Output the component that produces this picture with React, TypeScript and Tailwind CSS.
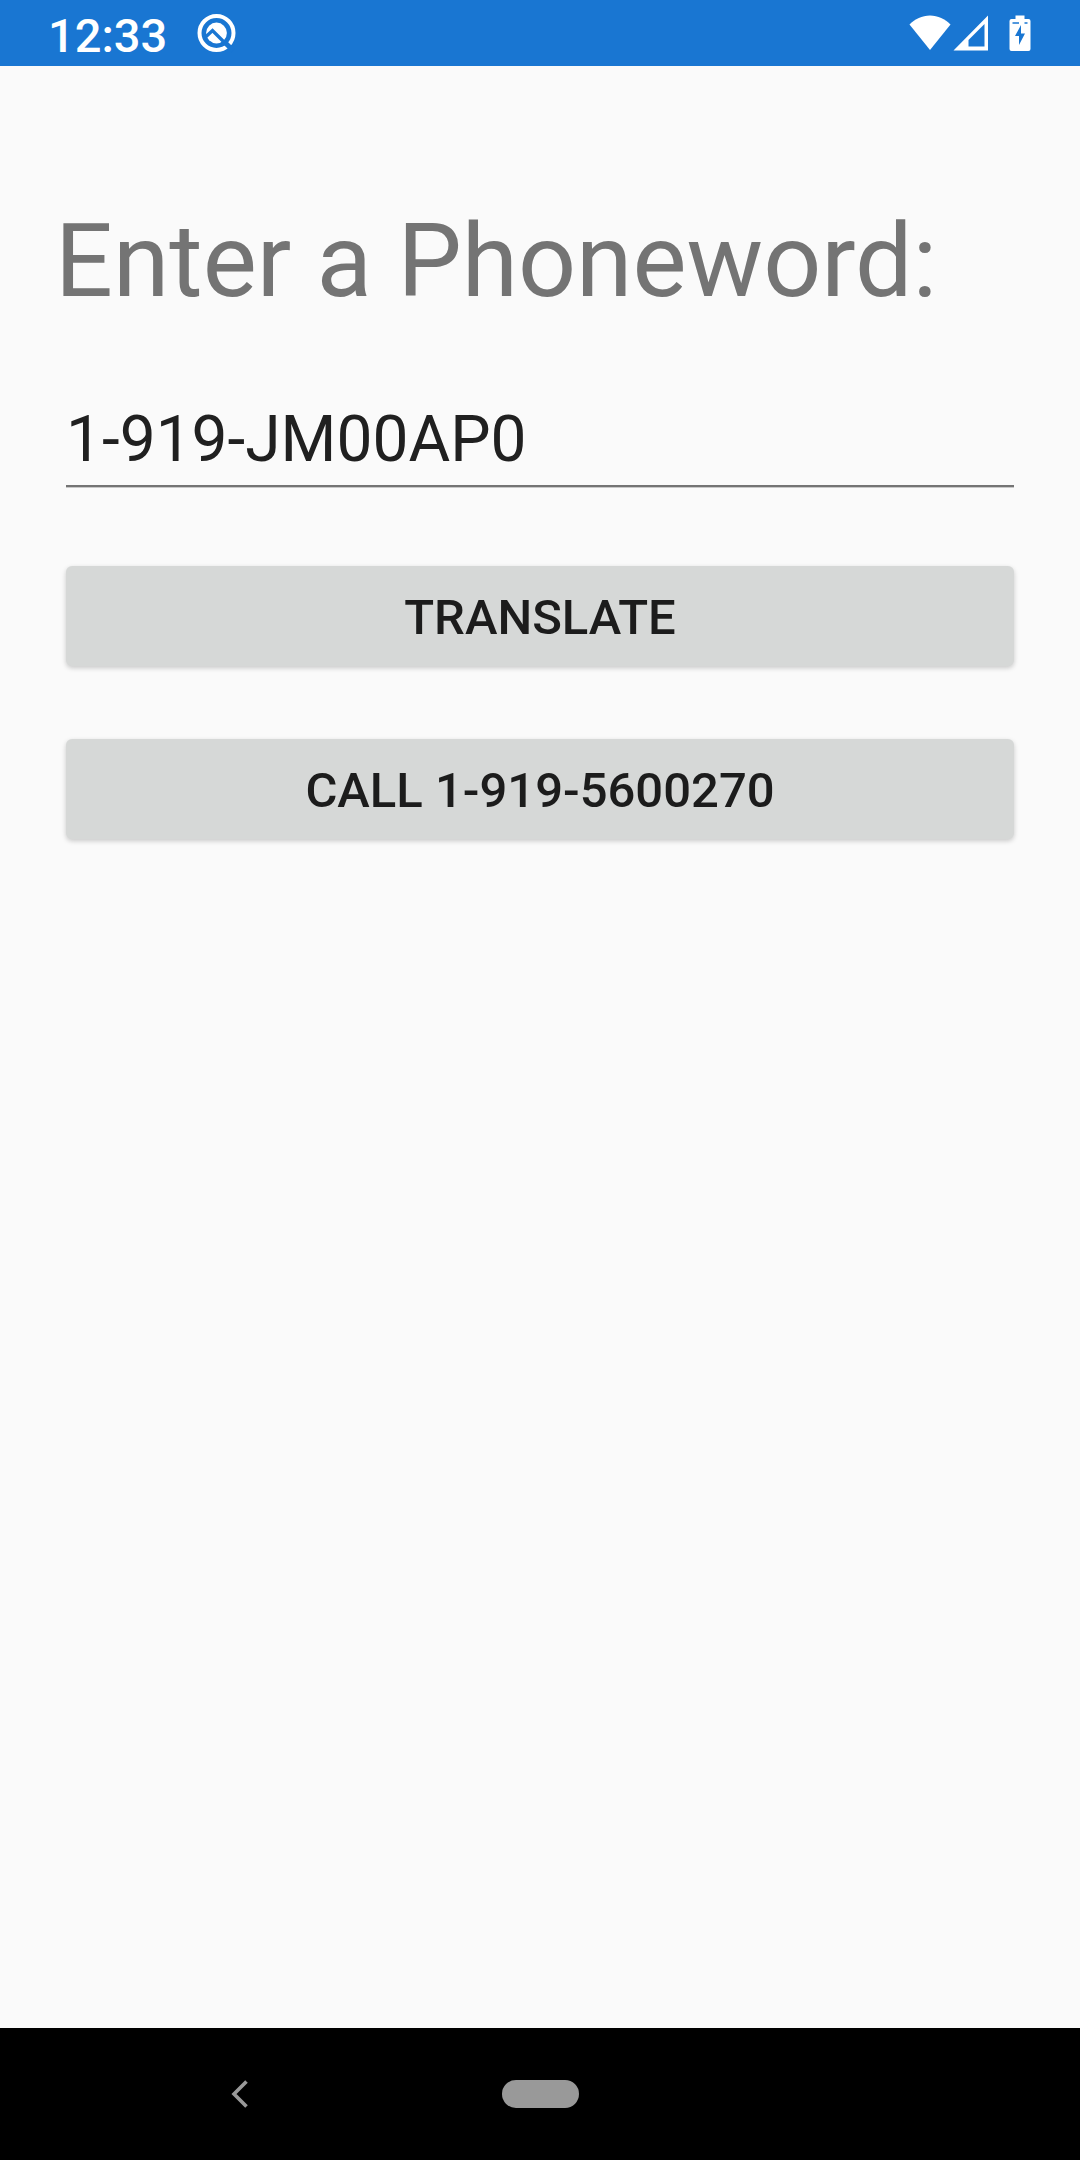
import React from "react";

function QBadge() {
  return (
    <svg viewBox="0 0 40 40" className="size-10" fill="none" aria-hidden="true">
      <circle cx="19.5" cy="20" r="17" stroke="#fff" strokeWidth="4" />
      <circle cx="19.5" cy="20" r="10.4" fill="#fff" />
      <path d="M7.5 25L15.5 17.5L30 32" stroke="#1976d2" strokeWidth="3.4" />
      <path d="M28 29.5L36 37.5" stroke="#1976d2" strokeWidth="5" />
    </svg>
  );
}

function WifiIcon() {
  return (
    <svg viewBox="0 0 42 36" className="h-9 w-[42px]" aria-hidden="true">
      <path d="M0.5 9.5C6 4 13 0.5 21 0.5S36 4 41.5 9.5L21 35Z" fill="#fff" />
    </svg>
  );
}

function SignalIcon() {
  return (
    <svg viewBox="0 0 36 36" className="size-9" aria-hidden="true">
      <path fillRule="evenodd" d="M0.5 35.5L35 0.5V35.5ZM15.5 31.5H31.5V9L15.5 25Z" fill="#fff" />
    </svg>
  );
}

function BatteryIcon() {
  return (
    <svg viewBox="0 0 22 36" className="h-9 w-[22px]" aria-hidden="true">
      <path
        fillRule="evenodd"
        d="M6.5 0.5H15.5V4H19.5Q21.5 4 21.5 6V34Q21.5 36 19.5 36H2.5Q0.5 36 0.5 34V6Q0.5 4 2.5 4H6.5ZM12 10L6 21H10V30L16 18.5H12Z"
        fill="#fff"
      />
      <path d="M3.5 8H10M15.5 8H18.5" stroke="#1976d2" strokeWidth="1.4" />
    </svg>
  );
}

const buttonClass =
  "block h-[100px] w-full rounded-md bg-[#d6d8d7] pt-[3px] text-[49px] leading-none font-medium text-[#1c1c1c] uppercase shadow-[0_2px_5px_rgba(0,0,0,0.2)]";

export default function App() {
  const [word, setWord] = React.useState("1-919-JM00AP0");

  return (
    <div className="flex min-h-screen flex-col bg-[#fafafa] font-['Roboto',sans-serif]">
      <header className="flex h-[66px] items-center justify-between bg-[#1976d2] pr-[49px] pl-12">
        <div className="flex items-center gap-[30px]">
          <time className="pt-1 text-[47px] leading-none font-medium text-white">12:33</time>
          <QBadge />
        </div>
        <div className="flex items-center">
          <WifiIcon />
          <span className="ml-[2px]">
            <SignalIcon />
          </span>
          <span className="ml-5">
            <BatteryIcon />
          </span>
        </div>
      </header>

      <main className="flex-1 px-[55px] pt-[134px]">
        <label htmlFor="phoneword" className="block text-[102px] leading-[122px] text-[#747474]">
          Enter a Phoneword:
        </label>
        <div className="px-[11px] pt-20">
          <input
            id="phoneword"
            type="text"
            value={word}
            onChange={(e) => setWord(e.target.value)}
            className="block h-[85px] w-full border-b-2 border-[#747474] bg-transparent pb-[7px] text-[64px] text-[#202020] shadow-[0_1px_0_#c8c8c8] outline-none"
          />
          <div className="flex flex-col gap-[73px] pt-[79px]">
            <button type="button" className={buttonClass}>
              Translate
            </button>
            <button type="button" className={buttonClass}>
              Call 1-919-5600270
            </button>
          </div>
        </div>
      </main>

      <nav className="grid h-[132px] grid-cols-9 items-center bg-black">
        <button type="button" aria-label="Back" className="col-start-2 col-end-4 flex justify-center">
          <svg viewBox="0 0 18 28" className="h-7 w-[18px]" fill="none" aria-hidden="true">
            <path d="M15.5 1.5L3 14L15.5 26.5" stroke="#999" strokeWidth="3.6" />
          </svg>
        </button>
        <button type="button" aria-label="Home" className="col-start-4 col-end-7 flex justify-center">
          <span className="h-7 w-[77px] rounded-full bg-[#999]" />
        </button>
      </nav>
    </div>
  );
}
